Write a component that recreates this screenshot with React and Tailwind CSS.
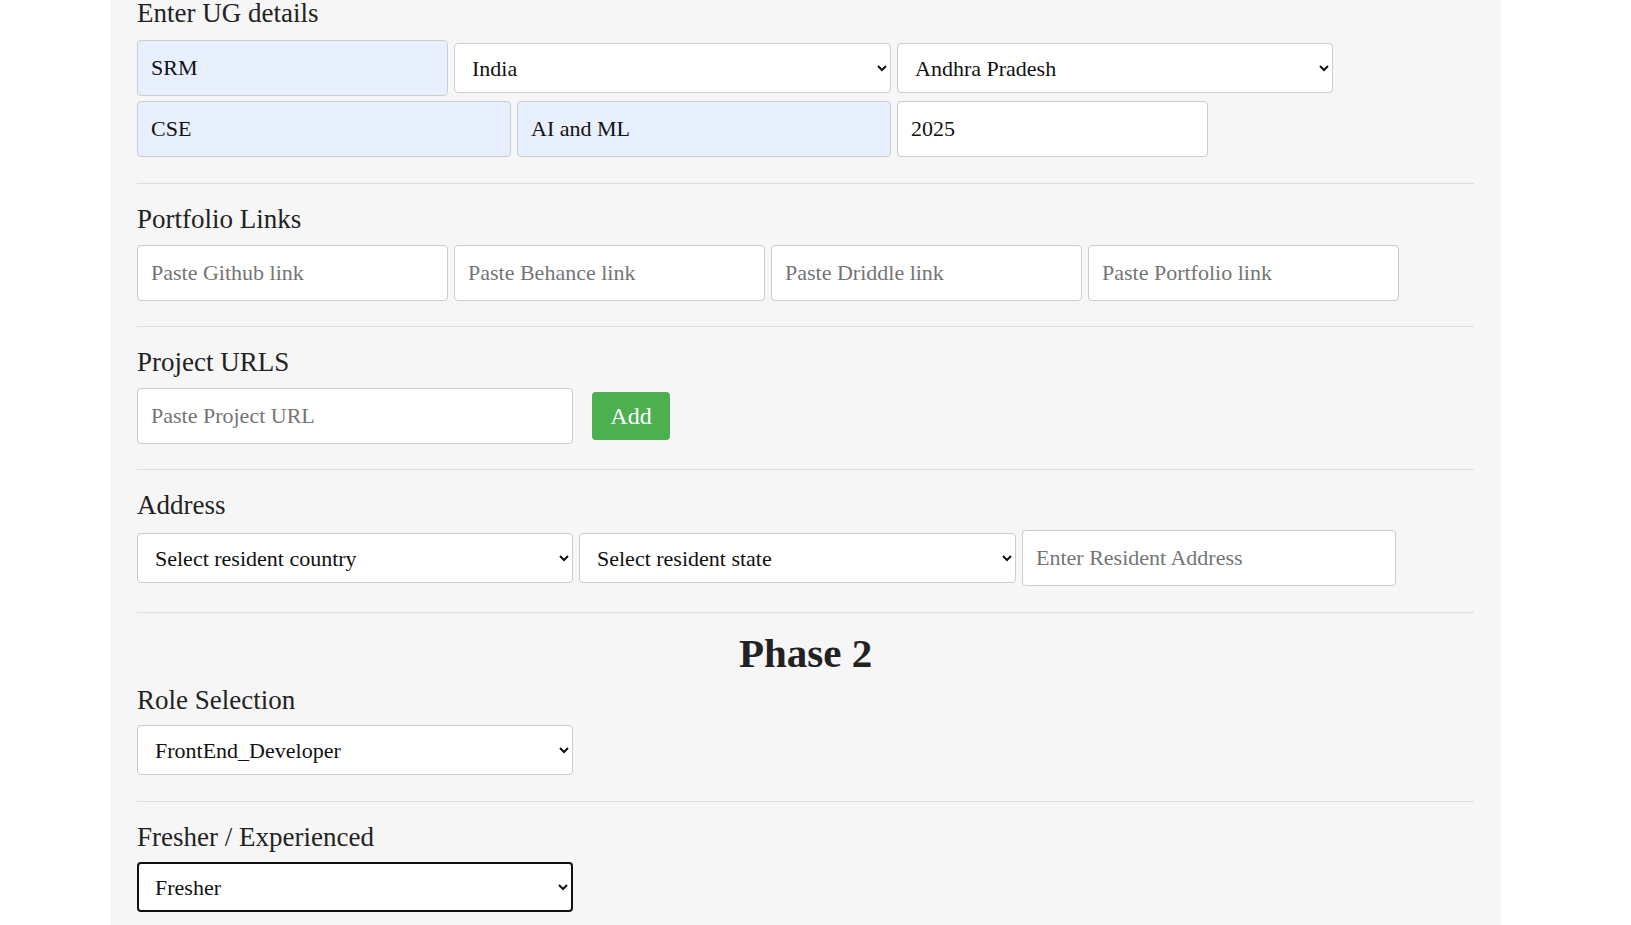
import { useState } from 'react';

const inputCls = 'h-[56px] rounded-[4px] border border-[#ccc] px-[13px] text-[22px] text-[#111] outline-none placeholder:text-[#757575]';
const filledCls = inputCls + ' bg-[#e8f0fe]';
const blankCls = inputCls + ' bg-white';
const selectCls = 'h-[50px] rounded-[4px] border border-[#ccc] bg-white pl-[13px] pr-[6px] text-[22px] text-[#111] outline-none';

function Heading({ children, className = '' }) {
  return <h3 className={'text-[27px] leading-[27px] text-[#222] ' + className}>{children}</h3>;
}

function Divider({ className = '' }) {
  return <div className={'h-px bg-[#ddd] ' + className}></div>;
}

export default function App() {
  const [projects, setProjects] = useState([]);
  const [projectUrl, setProjectUrl] = useState('');

  function addProject() {
    if (projectUrl.trim() === '') return;
    setProjects([...projects, projectUrl]);
    setProjectUrl('');
  }

  return (
    <div className="min-h-screen w-full bg-white font-['Liberation_Serif',serif]">
      <div className="ml-[110px] w-[1391px] bg-[#f6f6f6] px-[27px] pb-[40px]">
        {/* UG details */}
        <Heading>Enter UG details</Heading>
        <div className="mt-[13px] flex items-center gap-[6px]">
          <input className={filledCls + ' w-[311px]'} defaultValue="SRM" />
          <select className={selectCls + ' w-[437px]'} defaultValue="India">
            <option>India</option>
            <option>USA</option>
          </select>
          <select className={selectCls + ' w-[436px]'} defaultValue="Andhra Pradesh">
            <option>Andhra Pradesh</option>
            <option>Tamil Nadu</option>
          </select>
        </div>
        <div className="mt-[5px] flex items-center gap-[6px]">
          <input className={filledCls + ' w-[374px]'} defaultValue="CSE" />
          <input className={filledCls + ' w-[374px]'} defaultValue="AI and ML" />
          <input className={blankCls + ' w-[311px]'} defaultValue="2025" />
        </div>
        <Divider className="mt-[26px]" />

        {/* Portfolio */}
        <Heading className="mt-[22px]">Portfolio Links</Heading>
        <div className="mt-[12px] flex items-center gap-[6px]">
          <input className={blankCls + ' w-[311px]'} placeholder="Paste Github link" />
          <input className={blankCls + ' w-[311px]'} placeholder="Paste Behance link" />
          <input className={blankCls + ' w-[311px]'} placeholder="Paste Driddle link" />
          <input className={blankCls + ' w-[311px]'} placeholder="Paste Portfolio link" />
        </div>
        <Divider className="mt-[25px]" />

        {/* Projects */}
        <Heading className="mt-[22px]">Project URLS</Heading>
        <div className="mt-[12px] flex items-center gap-[19px]">
          <input
            className={blankCls + ' w-[436px]'}
            placeholder="Paste Project URL"
            value={projectUrl}
            onChange={e => setProjectUrl(e.target.value)}
          />
          <button
            onClick={addProject}
            className="h-[48px] w-[78px] rounded-[4px] bg-[#4caf50] text-[24px] text-white"
          >
            Add
          </button>
        </div>
        <Divider className="mt-[25px]" />

        {/* Address */}
        <Heading className="mt-[22px]">Address</Heading>
        <div className="mt-[11px] flex items-center gap-[6px]">
          <select className={selectCls + ' w-[436px]'} defaultValue="">
            <option value="">Select resident country</option>
            <option>India</option>
          </select>
          <select className={selectCls + ' w-[437px]'} defaultValue="">
            <option value="">Select resident state</option>
            <option>Andhra Pradesh</option>
          </select>
          <input className={blankCls + ' w-[374px]'} placeholder="Enter Resident Address" />
        </div>
        <Divider className="mt-[26px]" />

        <h2 className="mt-[20px] text-center text-[41px] font-bold leading-[40px] text-[#222]">Phase 2</h2>

        <Heading className="mt-[14px]">Role Selection</Heading>
        <div className="mt-[11px]">
          <select className={selectCls + ' w-[436px]'} defaultValue="FrontEnd_Developer">
            <option>FrontEnd_Developer</option>
            <option>BackEnd_Developer</option>
            <option>FullStack_Developer</option>
          </select>
        </div>
        <Divider className="mt-[26px]" />

        <Heading className="mt-[22px]">Fresher / Experienced</Heading>
        <div className="mt-[11px]">
          <select
            className="h-[50px] w-[436px] rounded-[4px] border-2 border-[#111] bg-white pl-[12px] pr-[5px] text-[22px] text-[#111] outline-none"
            defaultValue="Fresher"
          >
            <option>Fresher</option>
            <option>Experienced</option>
          </select>
        </div>
      </div>
    </div>
  );
}
